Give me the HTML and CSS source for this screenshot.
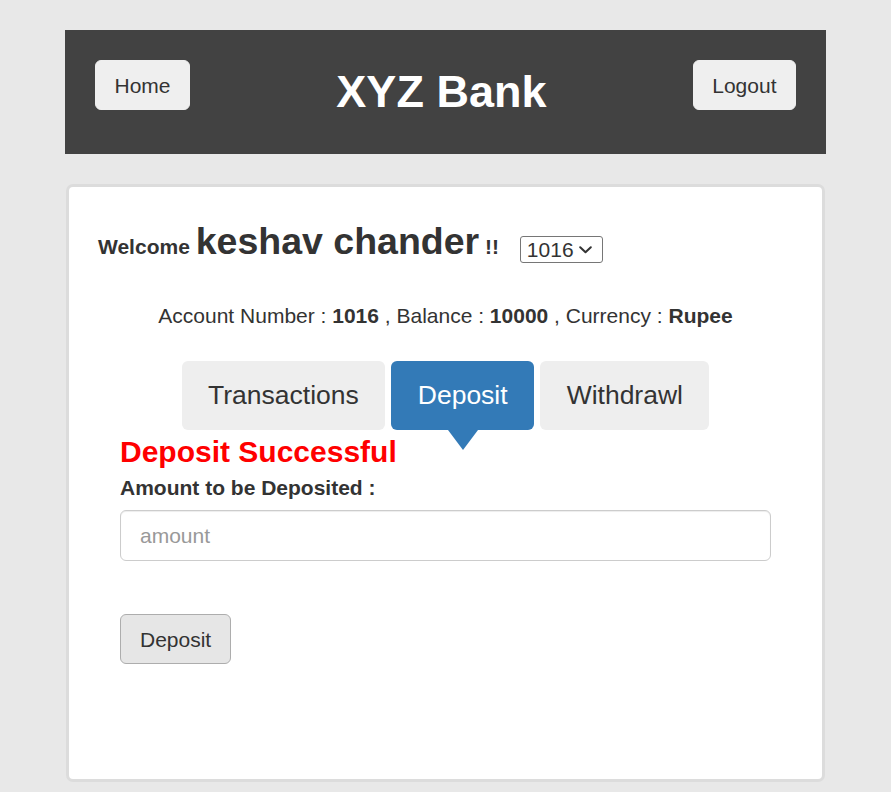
FILE: index.html
```html
<!DOCTYPE html>
<html lang="en">
<head>
<meta charset="utf-8">
<title>XYZ Bank</title>
<link rel="stylesheet" href="styles.css">
</head>
<body>
<div class="page">
  <header class="topbar">
    <button class="btn btn-light">Home</button>
    <h1 class="title">XYZ Bank</h1>
    <button class="btn btn-light">Logout</button>
  </header>
  <main class="card">
    <div class="welcome">
      <span class="welcome-word">Welcome</span>
      <span class="username">keshav chander</span>
      <span class="bang">!!</span>
      <span class="select-wrap">
        <select class="acct-select"><option>1016</option></select>
        <svg class="chev" width="13" height="8" viewBox="0 0 13 8" aria-hidden="true"><path d="M1.2 1.2 L6.5 6.3 L11.8 1.2" fill="none" stroke="#333" stroke-width="2" stroke-linecap="round" stroke-linejoin="round"/></svg>
      </span>
    </div>
    <div class="acct-info">Account Number : <strong>1016</strong> , Balance : <strong>10000</strong> , Currency : <strong>Rupee</strong></div>
    <nav class="tabs">
      <button class="tab">Transactions</button>
      <button class="tab active">Deposit</button>
      <button class="tab">Withdrawl</button>
    </nav>
    <form class="form">
      <div class="msg">Deposit Successful</div>
      <label class="label">Amount to be Deposited :</label>
      <input class="input" type="number" placeholder="amount">
      <button type="button" class="btn btn-default">Deposit</button>
    </form>
  </main>
</div>
</body>
</html>
```

FILE: styles.css
```css
* { box-sizing: border-box; }
html, body { margin: 0; padding: 0; }
body {
  background: #e8e8e8;
  font-family: "Liberation Sans", Arial, sans-serif;
  color: #333;
  font-size: 21px;
}
.page {
  width: 761px;
  margin: 0 auto;
  padding-top: 30px;
}
.topbar {
  height: 124px;
  background: #424242;
  display: flex;
  justify-content: space-between;
  align-items: flex-start;
  padding: 30px 30px 0;
}
.btn {
  font-family: inherit;
  font-size: 21px;
  line-height: 30px;
  padding: 10px 18.5px 8px;
  border-radius: 6px;
  color: #333;
  cursor: pointer;
}
.btn-light {
  background: #efefef;
  border: 1px solid #efefef;
}
.title {
  margin: 0;
  padding-top: 7px;
  font-size: 45px;
  line-height: 50px;
  color: #fff;
  font-weight: bold;
}
.card {
  width: 759px;
  height: 598px;
  margin: 30px auto 0;
  background: #fff;
  border: 3px solid #dcdcdc;
  border-radius: 7px;
  padding: 33px 29px 0;
}
.welcome {
  font-weight: bold;
  height: 43px;
}
.welcome-word { font-size: 21px; }
.username { font-size: 37.5px; }
.bang { font-size: 21px; }
.select-wrap {
  position: relative;
  display: inline-block;
  margin-left: 15px;
  vertical-align: -3px;
}
.acct-select {
  -webkit-appearance: none;
  appearance: none;
  display: block;
  font-family: inherit;
  font-size: 21px;
  font-weight: normal;
  color: #333;
  height: 27px;
  width: 83px;
  border: 1px solid #767676;
  border-radius: 3px;
  background: #fff;
  padding: 0 0 0 6px;
  line-height: 25px;
}
.chev {
  position: absolute;
  right: 11px;
  top: 10px;
  pointer-events: none;
}
.acct-info {
  text-align: center;
  line-height: 30px;
  margin-top: 38px;
}
.tabs {
  display: flex;
  justify-content: center;
  gap: 6px;
  margin-top: 30px;
}
.tab {
  position: relative;
  font-family: inherit;
  font-size: 26.5px;
  height: 69px;
  padding: 0 26.5px;
  border: none;
  border-radius: 6px;
  background: #eee;
  color: #333;
}
.tab.active {
  background: #337ab7;
  color: #fff;
}
.tab.active::after {
  content: "";
  position: absolute;
  left: 50%;
  top: 100%;
  transform: translateX(-50%);
  border-left: 15px solid transparent;
  border-right: 15px solid transparent;
  border-top: 20px solid #337ab7;
}
.form {
  margin: 5px 22px 0;
  display: flex;
  flex-direction: column;
  align-items: flex-start;
}
.msg {
  color: #f00;
  font-weight: bold;
  font-size: 30px;
  line-height: 33px;
}
.label {
  font-weight: bold;
  line-height: 30px;
  margin-top: 5px;
}
.input {
  width: 100%;
  height: 51px;
  margin-top: 7px;
  font-family: inherit;
  font-size: 21px;
  padding: 9px 19px;
  border: 1px solid #ccc;
  border-radius: 6px;
  box-shadow: inset 0 1px 1px rgba(0,0,0,.075);
  color: #555;
}
.input::placeholder { color: #999; }
.btn-default {
  margin-top: 53px;
  padding-left: 19px;
  padding-right: 19px;
  background: #e6e6e6;
  border: 1px solid #adadad;
}
```
